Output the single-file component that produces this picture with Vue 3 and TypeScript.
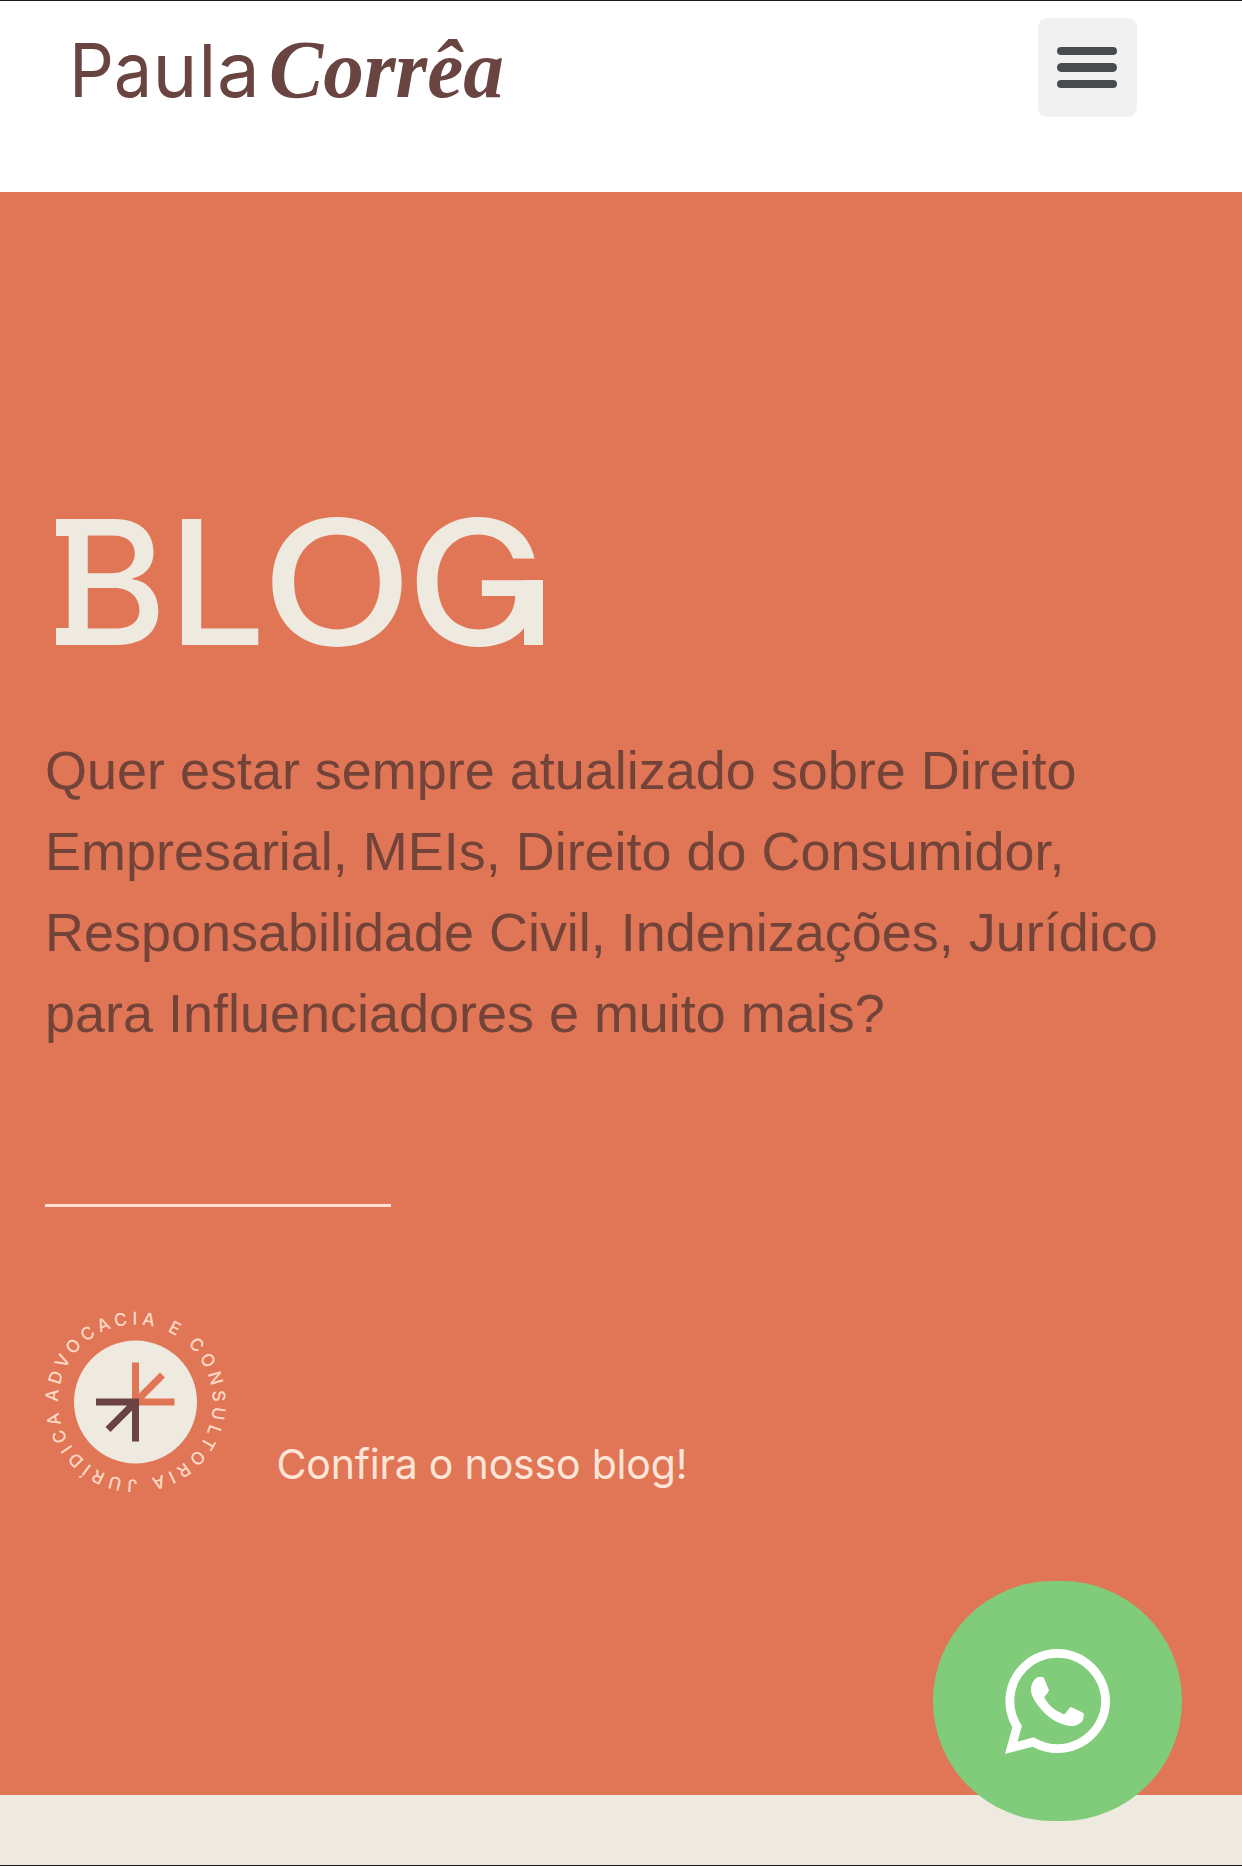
<script setup lang="ts">
const description: string[] = [
  'Quer estar sempre atualizado sobre Direito',
  'Empresarial, MEIs, Direito do Consumidor,',
  'Responsabilidade Civil, Indenizações, Jurídico',
  'para Influenciadores e muito mais?',
]
</script>

<template>
  <div class="page">
    <header class="header">
      <svg class="logo" width="444" height="80" viewBox="0 0 444 80" role="img" aria-label="Paula Corrêa">
        <text class="logo-first" y="76"><tspan x="3" textLength="45" lengthAdjust="spacingAndGlyphs">P</tspan><tspan class="low" x="48" textLength="38" lengthAdjust="spacingAndGlyphs">a</tspan><tspan class="low" x="86.500">u</tspan><tspan class="tall" x="132.500">l</tspan><tspan class="low" x="151">a</tspan></text>
        <text class="logo-last" x="203" y="76" textLength="235" lengthAdjust="spacingAndGlyphs">Corrêa</text>
      </svg>
      <button class="menu" aria-label="Menu">
        <span></span><span></span><span></span>
      </button>
    </header>

    <main class="hero">
      <h1 class="title">
        <svg width="520" height="150" viewBox="0 0 520 150">
          <text x="10" y="138" textLength="112" lengthAdjust="spacingAndGlyphs">B</text>
          <text x="123" y="138">L</text>
          <text x="216.500" y="138" textLength="151" lengthAdjust="spacingAndGlyphs">O</text>
          <text x="361.500" y="138" textLength="140" lengthAdjust="spacingAndGlyphs">G</text>
          <path d="M11 12h20v17H11zM11 121h20v17H11zM479 73h19v65h-19z" />
        </svg>
      </h1>
      <p class="description">
        <span v-for="line in description" :key="line">{{ line }}</span>
      </p>
      <hr class="rule" />
      <div class="callout">
        <svg class="seal" width="182" height="182" viewBox="-90.500 -91 182 182">
          <defs><path id="seal-ring" d="M-77.500 0A77.500 77.500 0 1 1 77.500 0A77.500 77.500 0 1 1 -77.500 0" /></defs>
          <text><textPath href="#seal-ring" textLength="476">ADVOCACIA E CONSULTORIA JURÍDICA</textPath></text>
          <circle r="61.500" fill="#efeae0" />
          <g fill="none" stroke-width="7">
            <path d="M0-39.500V0H39M0 0L27-27" stroke="#e07655" />
            <path d="M-39.500 0H0V39.500M0 0L-27.500 27.500" stroke="#6a4342" />
          </g>
        </svg>
        <svg class="invite" width="420" height="60" viewBox="0 0 420 60">
          <text x="-0.500" y="40" textLength="411">Confira o nosso blog!</text>
        </svg>
      </div>
    </main>
    <footer class="next"></footer>

    <a class="whatsapp" aria-label="WhatsApp">
      <svg width="105" height="105" viewBox="0 32 448 448" fill="#fff">
        <path d="M380.900 97.100C339 55.100 283.200 32 223.900 32c-122.400 0-222 99.600-222 222 0 39.100 10.200 77.300 29.600 111L0 480l117.700-30.900c32.400 17.700 68.900 27 106.100 27h.1c122.300 0 224.100-99.600 224.100-222 0-59.300-25.200-115-67.100-157zm-157 341.600c-33.200 0-65.700-8.900-94-25.700l-6.700-4-69.800 18.300L72 359.200l-4.400-7c-18.500-29.400-28.200-63.300-28.200-98.200 0-101.700 82.800-184.500 184.600-184.500 49.300 0 95.600 19.200 130.400 54.100 34.800 34.900 56.200 81.200 56.100 130.500 0 101.800-84.900 184.600-186.600 184.600zm101.200-138.200c-5.500-2.800-32.800-16.200-37.900-18-5.100-1.900-8.800-2.800-12.500 2.800-3.700 5.600-14.300 18-17.600 21.800-3.200 3.700-6.500 4.200-12 1.400-32.600-16.300-54-29.100-75.500-66-5.700-9.800 5.700-9.100 16.300-30.300 1.800-3.700.9-6.900-.5-9.700-1.400-2.800-12.500-30.100-17.100-41.200-4.500-10.800-9.100-9.300-12.500-9.500-3.200-.2-6.900-.2-10.600-.2-3.700 0-9.700 1.400-14.800 6.900-5.100 5.600-19.400 19-19.400 46.300 0 27.300 19.900 53.700 22.600 57.400 2.800 3.700 39.100 59.700 94.800 83.800 35.200 15.200 49 16.500 66.600 13.900 10.700-1.600 32.800-13.400 37.400-26.400 4.600-13 4.600-24.100 3.200-26.400-1.300-2.500-5-3.900-10.500-6.600z" />
      </svg>
    </a>
  </div>
</template>

<style>
body { margin: 0; }
</style>

<style scoped>
.page {
  position: relative;
  display: flex;
  flex-direction: column;
  box-sizing: border-box;
  width: 1242px;
  height: 1866px;
  border-top: 1px solid #1b191b;
  border-bottom: 1px solid #1b191b;
  background: #fff;
  overflow: hidden;
}
.header {
  display: flex;
  justify-content: space-between;
  align-items: flex-start;
  box-sizing: border-box;
  height: 191px;
  padding: 17px 105px 0 66px;
}
.logo { margin-top: 3px; fill: #694440; overflow: visible; }
.logo-first { font: 400 74px Inter, sans-serif; }
.logo-first .low { font-size: 76px; }
.logo-first .tall { font-size: 73px; }
.logo-last { font: italic 700 83px "Liberation Serif", serif; }
.menu {
  display: flex;
  flex-direction: column;
  align-items: center;
  justify-content: center;
  gap: 8px;
  width: 99px;
  height: 99px;
  padding: 0 2px 0 0;
  border: 0;
  border-radius: 9px;
  background: #f1f1f1;
}
.menu span { width: 60px; height: 8.500px; border-radius: 5px; background: #494c4f; }
.hero {
  box-sizing: border-box;
  height: 1603px;
  padding: 315px 45px 0;
  background: #e07655;
}
.title { margin: 0; height: 150px; }
.title svg { display: block; overflow: visible; fill: #efeae0; }
.title text { font: 500 173px Inter, sans-serif; }
.description {
  display: flex;
  flex-direction: column;
  margin: 73px 0 0;
  color: #724339;
  font: 53.960px/81px "Liberation Sans", Arial, sans-serif;
  white-space: nowrap;
}
.rule { width: 346px; height: 3px; margin: 150px 0 0; border: 0; background: #ffe2d4; }
.callout { display: flex; align-items: flex-end; gap: 50px; margin-top: 104px; }
.seal { overflow: visible; }
.seal text { font: 500 17.500px Inter, sans-serif; fill: #ffd9c8; }
.invite { overflow: visible; margin-bottom: -6px; }
.invite text { font: 400 41px Inter, sans-serif; fill: #ffe5d8; }
.next { flex: 1; background: #efeae0; }
.whatsapp {
  position: absolute;
  right: 60px;
  bottom: 44px;
  display: flex;
  align-items: center;
  justify-content: center;
  width: 249px;
  height: 240px;
  border-radius: 120px;
  background: #80cc7b;
}
</style>
